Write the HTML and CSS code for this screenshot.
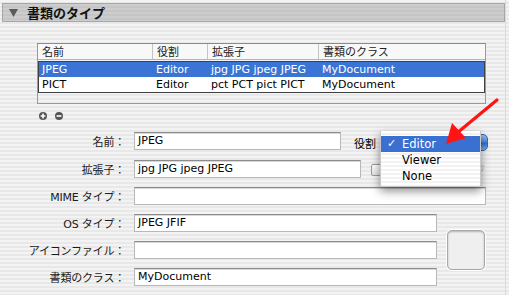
FILE: index.html
```html
<!DOCTYPE html>
<html lang="ja">
<head>
<meta charset="utf-8">
<link rel="stylesheet" href="styles.css">
</head>
<body>
<div class="window">
  <div class="header">
    <svg class="tri" width="9" height="8" viewBox="0 0 9 8"><polygon points="0,0 9,0 4.5,8" fill="#5a5a5a"/></svg>
    <span class="title">書類のタイプ</span>
  </div>

  <div class="main">
    <div class="table">
      <div class="thead">
        <div class="th">名前</div>
        <div class="th">役割</div>
        <div class="th">拡張子</div>
        <div class="th">書類のクラス</div>
      </div>
      <div class="rows">
        <div class="tr sel">
          <div class="td">JPEG</div>
          <div class="td">Editor</div>
          <div class="td">jpg JPG jpeg JPEG</div>
          <div class="td">MyDocument</div>
        </div>
        <div class="tr">
          <div class="td">PICT</div>
          <div class="td">Editor</div>
          <div class="td">pct PCT pict PICT</div>
          <div class="td">MyDocument</div>
        </div>
      </div>
    </div>

    <div class="pm">
      <span class="circ"><svg width="8" height="8" viewBox="0 0 8 8"><path d="M4 1.6V6.4M1.6 4H6.4" stroke="#fff" stroke-width="1.6"/></svg></span>
      <span class="circ"><svg width="8" height="8" viewBox="0 0 8 8"><path d="M1.6 4H6.4" stroke="#fff" stroke-width="1.6"/></svg></span>
    </div>
  </div>

  <div class="form">
    <div class="row first">
      <label class="lbl">名前：</label>
      <div class="field w206">JPEG</div>
      <span class="role">役割</span>
      <div class="popup"><span class="pend"></span></div>
    </div>
    <div class="row">
      <label class="lbl">拡張子：</label>
      <div class="field w226">jpg JPG jpeg JPEG</div>
      <span class="check"></span>
      <span class="checklbl">ファイルパッケージ</span>
    </div>
    <div class="row">
      <label class="lbl">MIME タイプ：</label>
      <div class="field w352"></div>
    </div>
    <div class="group">
      <div class="col">
        <div class="row">
          <label class="lbl">OS タイプ：</label>
          <div class="field w303">JPEG JFIF</div>
        </div>
        <div class="row">
          <label class="lbl">アイコンファイル：</label>
          <div class="field w303"></div>
        </div>
        <div class="row last">
          <label class="lbl">書類のクラス：</label>
          <div class="field w303">MyDocument</div>
        </div>
      </div>
      <div class="well"><div class="wellin"></div></div>
    </div>
  </div>
</div>

<div class="menu">
  <div class="mi on"><span class="ck">✓</span>Editor</div>
  <div class="mi">Viewer</div>
  <div class="mi">None</div>
</div>

<svg class="arrow" width="509" height="295" viewBox="0 0 509 295">
  <line x1="497" y1="100" x2="457" y2="133" stroke="#ff1414" stroke-width="3.2" stroke-linecap="round"/>
  <polygon points="446,144 452,123 466,138" fill="#ff1414"/>
</svg>
</body>
</html>
```

FILE: styles.css
```css
html, body {
  margin: 0;
  padding: 0;
}
body {
  width: 509px;
  height: 295px;
  overflow: hidden;
  position: relative;
  background: repeating-linear-gradient(to bottom, #f3f3f3 0, #f3f3f3 2px, #e8e8e8 2px, #e8e8e8 4px);
  font-family: "DejaVu Sans", "Noto Sans CJK JP", sans-serif;
  font-size: 11px;
  color: #000;
}
.window {
  width: 506px;
  height: 295px;
  border-right: 1px solid #dadada;
  box-sizing: border-box;
  padding-top: 3px;
}
.header {
  margin: 0 0 0 2px;
  height: 19px;
  box-sizing: border-box;
  border: 1px solid #a6a6a6;
  background: repeating-linear-gradient(to bottom, #cdcdcd 0, #cdcdcd 2px, #c5c5c5 2px, #c5c5c5 4px);
  display: flex;
  align-items: center;
  padding-left: 6px;
  gap: 9px;
}
.tri {
  display: block;
  margin-top: 1px;
}
.title {
  font-family: "Noto Sans CJK JP", sans-serif;
  font-weight: bold;
  font-size: 13px;
  line-height: 17px;
  color: #111;
}
.main {
  padding: 21px 0 0 37px;
}
.table {
  width: 449px;
  height: 61px;
  box-sizing: border-box;
  border: 1px solid #9a9a9a;
  border-top-color: #8a8a8a;
}
.thead {
  display: grid;
  grid-template-columns: 114px 55px 111px 1fr;
  height: 15px;
  background: #f8f8f8;
  border-bottom: 1px solid #b4b4b4;
}
.th {
  font-family: "Noto Sans CJK JP", sans-serif;
  font-size: 11px;
  line-height: 15px;
  padding-left: 4px;
  border-left: 1px solid #c4c4c4;
  color: #222;
}
.th:first-child {
  border-left: none;
}
.rows {
  margin-top: 1px;
  border: 1px solid #404040;
  background: #fff;
}
.tr {
  display: grid;
  grid-template-columns: 113px 55px 111px 1fr;
  height: 15px;
  line-height: 15px;
}
.td {
  padding-left: 3px;
  white-space: nowrap;
  overflow: hidden;
}
.tr .td:nth-child(2),
.tr .td:nth-child(3),
.tr .td:nth-child(4) {
  padding-left: 4px;
}
.tr.sel {
  background: #3a74d4;
  color: #fff;
}
.pm {
  display: flex;
  gap: 8px;
  padding: 8px 0 0 2px;
  height: 8px;
}
.circ {
  width: 8px;
  height: 8px;
  border-radius: 50%;
  background: #545454;
  display: block;
}
.circ svg {
  display: block;
}
.form {
  padding-top: 12px;
}
.row {
  display: flex;
  align-items: center;
  height: 18px;
  margin-bottom: 9px;
}
.row.first {
  margin-bottom: 10px;
}
.row.last {
  margin-bottom: 0;
}
.lbl {
  width: 125px;
  text-align: right;
  font-family: "DejaVu Sans", "Noto Sans CJK JP", sans-serif;
  font-size: 11px;
  color: #1a1a1a;
  margin-right: 9px;
  white-space: nowrap;
  letter-spacing: -0.2px;
}
.field {
  height: 18px;
  box-sizing: border-box;
  background: #fff;
  border: 1px solid #b8b8b8;
  border-top: 1px solid #8c8c8c;
  box-shadow: inset 0 1px 0 #d8d8d8;
  padding-left: 3px;
  line-height: 16px;
  white-space: nowrap;
}
.w206 { width: 207px; }
.w226 { width: 227px; }
.w352 { width: 352px; }
.w303 { width: 303px; }
.role {
  font-family: "Noto Sans CJK JP", sans-serif;
  margin-left: 13px;
  margin-top: 4px;
}
.popup {
  margin-left: 6px;
  margin-top: 3px;
  width: 106px;
  height: 17px;
  border-radius: 5px;
  background: linear-gradient(to bottom, #9cc3f1 0%, #4f8fe2 45%, #2a6ed0 55%, #7db4f3 100%);
  border: 1px solid #3a64a8;
  box-sizing: border-box;
  position: relative;
}
.check {
  width: 10px;
  height: 10px;
  margin-left: 10px;
  border: 1px solid #9a9a9a;
  border-radius: 2px;
  background: linear-gradient(#ffffff, #e4e4e4);
  margin-top: 2px;
}
.checklbl {
  margin-left: 3px;
  font-family: "Noto Sans CJK JP", sans-serif;
  font-size: 11px;
  color: #b0b0b0;
  white-space: nowrap;
}
.group {
  display: flex;
  align-items: center;
}
.well {
  margin-left: 9px;
  width: 40px;
  height: 42px;
  box-sizing: border-box;
  border: 1px solid #fff;
  border-radius: 6px;
  padding: 0;
}
.wellin {
  width: 100%;
  height: 100%;
  box-sizing: border-box;
  border-radius: 5px;
  border: 1px solid #a8a8a8;
  background: #efefef;
  box-shadow: inset 0 1px 2px rgba(0,0,0,0.25);
}
.menu {
  position: absolute;
  left: 380px;
  top: 131px;
  width: 101px;
  height: 56px;
  box-sizing: border-box;
  padding-top: 5px;
  background: repeating-linear-gradient(to bottom, #ffffff 0, #ffffff 2px, #f2f2f2 2px, #f2f2f2 4px);
  box-shadow: 0 4px 9px rgba(0,0,0,0.45);
  border: 1px solid #c9c9c9;
  border-top: none;
}
.mi {
  height: 16px;
  line-height: 16px;
  padding-left: 21px;
  font-size: 11.5px;
  position: relative;
  color: #000;
}
.mi.on {
  background: #3a70cf;
  color: #fff;
}
.ck {
  position: absolute;
  left: 6px;
  top: 0;
  font-size: 11px;
}
.arrow {
  position: absolute;
  left: 0;
  top: 0;
  pointer-events: none;
}
```
